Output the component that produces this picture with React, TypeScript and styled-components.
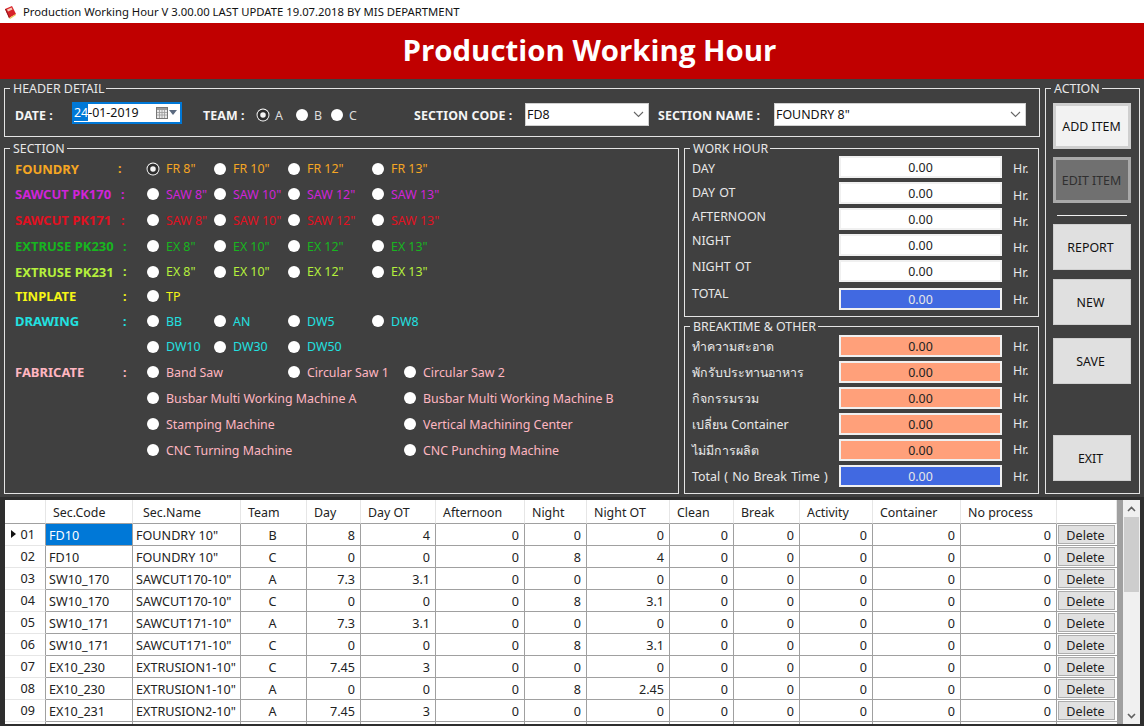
import React from 'react';
import styled, { createGlobalStyle } from 'styled-components';

const GlobalStyle = createGlobalStyle`
  html, body {
    margin: 0;
    padding: 0;
    background: #404040;
  }
  * {
    box-sizing: border-box;
  }
`;

const uiFont = `'Noto Sans', Tahoma, 'DejaVu Sans', sans-serif`;

const Page = styled.div`
  width: 1144px;
  height: 726px;
  overflow: hidden;
  background: #404040;
  font-family: ${uiFont};
  font-size: 12.4px;
  color: #f0f0f0;
`;

const TitleBar = styled.div`
  display: flex;
  align-items: center;
  height: 23px;
  padding-left: 4px;
  gap: 6px;
  background: #fff;
  color: #111;
  font-size: 11.3px;
`;

const Banner = styled.div`
  display: flex;
  align-items: center;
  justify-content: center;
  height: 56px;
  padding: 0 0 2px 35px;
  background: #c00000;
  color: #fff;
  font-family: 'Open Sans', sans-serif;
  font-weight: 700;
  font-size: 29.4px;
`;

const Main = styled.div`
  display: grid;
  grid-template-columns: 1036px 95px;
  column-gap: 5px;
  align-items: start;
  height: 418px;
  padding: 2px 0 0 4px;
`;

const LeftColumn = styled.div`
  display: flex;
  flex-direction: column;
  gap: 4px;
`;

const Group = styled.fieldset<{ $height?: number }>`
  margin: 0;
  padding: 0;
  min-width: 0;
  border: 1px solid #e4e4e4;
  height: ${(p) => (p.$height ? `${p.$height}px` : 'auto')};
`;

const Caption = styled.legend`
  margin-left: 5px;
  padding: 1px 2px 0 3px;
  font-size: 12.4px;
  line-height: 14px;
  color: #e8e8e8;
`;

/* header detail */
const HeaderRow = styled.div`
  display: flex;
  align-items: center;
  height: 24px;
  margin-top: 7px;
  padding-left: 10px;
`;

const BoldLabel = styled.span<{ $width: number }>`
  width: ${(p) => p.$width}px;
  flex: none;
  font-weight: 700;
  letter-spacing: 0.1px;
  color: #f4f4f4;
`;

const DateBox = styled.div`
  display: flex;
  align-items: center;
  width: 110px;
  height: 22px;
  flex: none;
  margin: 0 21px 5px 0;
  background: #fff;
  border: 2px solid #0078d7;
  color: #111;
`;

const Selected = styled.span`
  background: #0078d7;
  color: #fff;
`;

const DateIcons = styled.span`
  display: flex;
  align-items: center;
  margin-left: auto;
  margin-right: 3px;
  gap: 1px;
`;

const TeamOption = styled.span<{ $width: number }>`
  display: flex;
  align-items: center;
  gap: 6px;
  width: ${(p) => p.$width}px;
  flex: none;
  color: #dcdcdc;
`;

const Select = styled.div<{ $width: number; $gap: number }>`
  display: flex;
  align-items: center;
  justify-content: space-between;
  width: ${(p) => p.$width}px;
  height: 23px;
  flex: none;
  margin: 0 ${(p) => p.$gap}px 1px 0;
  padding: 0 4px 1px 1px;
  background: #fff;
  border: 1px solid #d0d0d0;
  color: #111;
`;

/* radios */
const Dot = styled.span<{ $on?: boolean }>`
  display: inline-block;
  flex: none;
  width: 12px;
  height: 12px;
  border-radius: 50%;
  background: ${(p) => (p.$on ? '#f4f4f4' : '#fff')};
  border: ${(p) => (p.$on ? '3px solid #2e2e2e' : 'none')};
  box-shadow: ${(p) => (p.$on ? '0 0 0 1px #fff' : 'none')};
  transform: ${(p) => (p.$on ? 'scale(0.92)' : 'none')};
`;

/* section */
const SectionGrid = styled.div`
  display: grid;
  grid-template-columns: 103px 29px 67px 74px 84px 32px 1fr;
  grid-template-rows: 25px 26px 26px 26px 25px 24px 26px 25px 26px 26px 26px 26px;
  padding-left: 10px;
  align-items: center;
`;

const GroupLabel = styled.span<{ $color: string; $row: number }>`
  grid-column: 1;
  grid-row: ${(p) => p.$row};
  font-size: 13px;
  font-weight: 700;
  color: ${(p) => p.$color};
  white-space: nowrap;
`;

const Colon = styled.span<{ $color: string; $row: number; $offset: number }>`
  grid-column: 2;
  grid-row: ${(p) => p.$row};
  margin-left: ${(p) => p.$offset}px;
  font-weight: 700;
  color: ${(p) => p.$color};
`;

const Choice = styled.label<{ $color: string; $row: number; $col: number }>`
  grid-column: ${(p) => p.$col} / span 3;
  grid-row: ${(p) => p.$row};
  display: flex;
  align-items: center;
  gap: 7px;
  color: ${(p) => p.$color};
  white-space: nowrap;
`;

/* hour panels */
const Split = styled.div`
  display: grid;
  grid-template-columns: 675px 355px;
  column-gap: 5px;
`;

const HourColumn = styled.div`
  display: flex;
  flex-direction: column;
  gap: 2px;
`;

const HourList = styled.div<{ $top: number }>`
  padding: ${(p) => p.$top}px 0 0 7px;
`;

const HourRow = styled.div<{ $mt?: number }>`
  display: grid;
  grid-template-columns: 147px 163px 1fr;
  height: 22px;
  margin-top: ${(p) => p.$mt ?? 4}px;
  align-items: center;
`;

const HourLabel = styled.span<{ $shift: number }>`
  transform: translateY(${(p) => p.$shift}px);
  color: #e8e8e8;
  white-space: nowrap;
  word-spacing: 1px;
`;

const HourValue = styled.div<{ $bg: string; $fg: string }>`
  display: flex;
  align-items: center;
  justify-content: center;
  height: 100%;
  background: ${(p) => p.$bg};
  color: ${(p) => p.$fg};
  border: 2px solid #f0f0f0;
`;

const Unit = styled.span<{ $shift: number }>`
  margin-left: 11px;
  transform: translateY(${(p) => p.$shift}px);
  color: #e8e8e8;
`;

/* action buttons */
const ActionList = styled.div`
  display: flex;
  flex-direction: column;
  padding: 7px 0 0 7px;
`;

const ActionButton = styled.div<{ $top: number; $tone?: 'light' | 'dim' }>`
  display: flex;
  align-items: center;
  justify-content: center;
  width: 78px;
  height: 46px;
  margin-top: ${(p) => p.$top}px;
  padding-right: ${(p) => (p.$tone ? 1 : 3)}px;
  color: ${(p) => (p.$tone === 'dim' ? '#2f2f2f' : '#111')};
  background: ${(p) =>
    p.$tone === 'dim' ? '#707070' : p.$tone === 'light' ? '#f2f2f2' : '#e0e0e0'};
  border: ${(p) => (p.$tone ? '3px' : '1px')} solid
    ${(p) => (p.$tone === 'dim' ? '#a9a9a9' : '#cfcfcf')};
`;

const Divider = styled.div`
  width: 70px;
  height: 1px;
  margin: 12px 0 0 4px;
  background: #f0f0f0;
`;

/* grid */
const GridArea = styled.div`
  height: 229px;
  padding: 3px 4px 0 5px;
  background: #2e2e2e;
`;

const GridPanel = styled.div`
  display: flex;
  height: 224px;
  background: #a0a0a0;
  overflow: hidden;
`;

const Table = styled.table`
  width: 1112px;
  flex: none;
  table-layout: fixed;
  border-collapse: separate;
  border-spacing: 0;
  align-self: flex-start;
  background: #fff;
  color: #222;
  font-size: 12.6px;
  line-height: 14px;
`;

const Th = styled.th<{ $pad?: number }>`
  height: 24px;
  padding: 2px 0 0 ${(p) => p.$pad ?? 7}px;
  font-weight: 400;
  font-size: 12.4px;
  text-align: left;
  background: #fff;
  border-right: 1px solid #e6e6e6;
  border-bottom: 1px solid #a0a0a0;
`;

const Td = styled.td<{ $align?: string; $active?: boolean }>`
  height: 22px;
  padding: 2px 5px 0 3px;
  text-align: ${(p) => p.$align ?? 'left'};
  white-space: nowrap;
  overflow: hidden;
  border-right: 1px solid #a0a0a0;
  border-bottom: 1px solid #a0a0a0;
  background: ${(p) => (p.$active ? '#0078d7' : '#fff')};
  color: ${(p) => (p.$active ? '#fff' : '#222')};
`;

const RowHead = styled.td`
  position: relative;
  height: 22px;
  padding: 0 10px 0 0;
  text-align: right;
  border-right: 1px solid #a0a0a0;
  border-bottom: 1px solid #e6e6e6;
  background: #fff;
`;

const Pointer = styled.span`
  position: absolute;
  left: 6px;
  top: 6px;
  width: 0;
  height: 0;
  border-left: 5px solid #111;
  border-top: 4px solid transparent;
  border-bottom: 4px solid transparent;
`;

const DeleteCell = styled.td`
  height: 22px;
  padding: 1px 2px 1px 1px;
  border-bottom: 1px solid #a0a0a0;
  background: #fff;
`;

const DeleteButton = styled.div`
  display: flex;
  align-items: center;
  justify-content: center;
  height: 19px;
  padding: 2px 2px 0 0;
  background: #e1e1e1;
  border: 1px solid #adadad;
  color: #222;
`;

const Scrollbar = styled.div`
  display: flex;
  flex-direction: column;
  align-items: center;
  width: 17px;
  height: 100%;
  margin-left: auto;
  background: #f0f0f0;
`;

const ScrollArrow = styled.div`
  display: flex;
  align-items: center;
  justify-content: center;
  flex: none;
  width: 100%;
  height: 17px;
`;

const ScrollThumb = styled.div`
  flex: none;
  width: 15px;
  height: 75px;
  background: #cdcdcd;
`;

const ScrollSpace = styled.div`
  flex: 1;
`;

const BookIcon = () => (
  <svg width="13" height="14" viewBox="0 0 13 14">
    <path d="M1 4 L8 1 L12 9 L5 13 Z" fill="#d8232a" />
    <path d="M1 4 L5 13 L6 13 L2 4 Z" fill="#8f1418" />
    <path d="M3 4.5 L7.5 2.5 L8.5 4.5 L4 6.5 Z" fill="#f6c9b4" />
    <path d="M5 13 L12 9 L12 10 L6 14 Z" fill="#e9c34f" />
  </svg>
);

const Chevron = () => (
  <svg width="11" height="7" viewBox="0 0 11 7">
    <path d="M1 1 L5.5 5.5 L10 1" fill="none" stroke="#666" strokeWidth="1.1" />
  </svg>
);

const CalendarIcon = () => (
  <svg width="12" height="12" viewBox="0 0 12 12">
    <rect x="0.5" y="0.5" width="11" height="11" fill="#e8e8e8" stroke="#777" />
    <rect x="1" y="1" width="10" height="2" fill="#9a9a9a" />
    <path d="M1 5.5H11M1 8H11M3.5 3V11M6 3V11M8.5 3V11" stroke="#999" strokeWidth="0.8" />
  </svg>
);

const DownTriangle = () => (
  <svg width="8" height="5" viewBox="0 0 8 5">
    <path d="M0 0H8L4 5Z" fill="#5b6a80" />
  </svg>
);

type Opt = { text: string; col: number; on?: boolean };

const col4 = (prefix: string, on = false): Opt[] =>
  ['8"', '10"', '12"', '13"'].map((s, i) => ({
    text: `${prefix} ${s}`,
    col: i + 3,
    on: on && i === 0,
  }));

const sections: {
  label?: string;
  color: string;
  row: number;
  colon?: number;
  options: Opt[];
}[] = [
  { label: 'FOUNDRY', color: '#f5a623', row: 1, colon: 0, options: col4('FR', true) },
  { label: 'SAWCUT PK170', color: '#d024d8', row: 2, colon: 3, options: col4('SAW') },
  { label: 'SAWCUT PK171', color: '#e01020', row: 3, colon: 3, options: col4('SAW') },
  { label: 'EXTRUSE PK230', color: '#17b51f', row: 4, colon: 5, options: col4('EX') },
  { label: 'EXTRUSE PK231', color: '#b5f03c', row: 5, colon: 5, options: col4('EX') },
  { label: 'TINPLATE', color: '#f5f516', row: 6, colon: 5, options: [{ text: 'TP', col: 3 }] },
  {
    label: 'DRAWING',
    color: '#22e0e0',
    row: 7,
    colon: 5,
    options: [
      { text: 'BB', col: 3 },
      { text: 'AN', col: 4 },
      { text: 'DW5', col: 5 },
      { text: 'DW8', col: 6 },
    ],
  },
  {
    color: '#22e0e0',
    row: 8,
    options: [
      { text: 'DW10', col: 3 },
      { text: 'DW30', col: 4 },
      { text: 'DW50', col: 5 },
    ],
  },
  {
    label: 'FABRICATE',
    color: '#ffb6c1',
    row: 9,
    colon: 5,
    options: [
      { text: 'Band Saw', col: 3 },
      { text: 'Circular Saw 1', col: 5 },
      { text: 'Circular Saw 2', col: 7 },
    ],
  },
  {
    color: '#ffb6c1',
    row: 10,
    options: [
      { text: 'Busbar Multi Working Machine A', col: 3 },
      { text: 'Busbar Multi Working Machine B', col: 7 },
    ],
  },
  {
    color: '#ffb6c1',
    row: 11,
    options: [
      { text: 'Stamping Machine', col: 3 },
      { text: 'Vertical Machining Center', col: 7 },
    ],
  },
  {
    color: '#ffb6c1',
    row: 12,
    options: [
      { text: 'CNC Turning Machine', col: 3 },
      { text: 'CNC Punching Machine', col: 7 },
    ],
  },
];

const workRows = [
  { label: 'DAY', shift: 1, unit: 1, mt: 0 },
  { label: 'DAY OT', shift: -1, unit: 2 },
  { label: 'AFTERNOON', shift: -3, unit: 2 },
  { label: 'NIGHT', shift: -5, unit: 2 },
  { label: 'NIGHT OT', shift: -5, unit: 1 },
  { label: 'TOTAL', shift: -6, unit: 0, mt: 6, total: true },
];

const breakRows = [
  { label: 'ทำความสะอาด', unit: 0, mt: 0 },
  { label: 'พักรับประทานอาหาร', unit: -2 },
  { label: 'กิจกรรมรวม', unit: -1 },
  { label: 'เปลี่ยน Container', unit: -1 },
  { label: 'ไม่มีการผลิต', unit: -1 },
  { label: 'Total ( No Break Time )', unit: 0, total: true },
];

const columns = [
  { title: 'Sec.Code', width: 87, pad: 7 },
  { title: 'Sec.Name', width: 108, pad: 10 },
  { title: 'Team', width: 66 },
  { title: 'Day', width: 54 },
  { title: 'Day OT', width: 75 },
  { title: 'Afternoon', width: 89 },
  { title: 'Night', width: 62 },
  { title: 'Night OT', width: 83 },
  { title: 'Clean', width: 64 },
  { title: 'Break', width: 66 },
  { title: 'Activity', width: 73 },
  { title: 'Container', width: 88 },
  { title: 'No process', width: 96 },
];

const rows = [
  ['FD10', 'FOUNDRY 10"', 'B', '8', '4', '0', '0', '0'],
  ['FD10', 'FOUNDRY 10"', 'C', '0', '0', '0', '8', '4'],
  ['SW10_170', 'SAWCUT170-10"', 'A', '7.3', '3.1', '0', '0', '0'],
  ['SW10_170', 'SAWCUT170-10"', 'C', '0', '0', '0', '8', '3.1'],
  ['SW10_171', 'SAWCUT171-10"', 'A', '7.3', '3.1', '0', '0', '0'],
  ['SW10_171', 'SAWCUT171-10"', 'C', '0', '0', '0', '8', '3.1'],
  ['EX10_230', 'EXTRUSION1-10"', 'C', '7.45', '3', '0', '0', '0'],
  ['EX10_230', 'EXTRUSION1-10"', 'A', '0', '0', '0', '8', '2.45'],
  ['EX10_231', 'EXTRUSION2-10"', 'A', '7.45', '3', '0', '0', '0'],
];

const SectionPanel: React.FC = () => (
  <Group $height={353}>
    <Caption>SECTION</Caption>
    <SectionGrid>
      {sections.map((s) => (
        <React.Fragment key={s.row}>
          {s.label && (
            <GroupLabel $color={s.color} $row={s.row}>
              {s.label}
            </GroupLabel>
          )}
          {s.label && (
            <Colon $color={s.color} $row={s.row} $offset={s.colon ?? 0}>
              :
            </Colon>
          )}
          {s.options.map((o) => (
            <Choice key={o.text + o.col} $color={s.color} $row={s.row} $col={o.col}>
              <Dot $on={o.on} />
              {o.text}
            </Choice>
          ))}
        </React.Fragment>
      ))}
    </SectionGrid>
  </Group>
);

const HourPanels: React.FC = () => (
  <HourColumn>
    <Group $height={176}>
      <Caption>WORK HOUR</Caption>
      <HourList $top={0}>
        {workRows.map((r) => (
          <HourRow key={r.label} $mt={r.mt}>
            <HourLabel $shift={r.shift}>{r.label}</HourLabel>
            <HourValue $bg={r.total ? '#4169e1' : '#fff'} $fg={r.total ? '#e8e8e8' : '#222'}>
              0.00
            </HourValue>
            <Unit $shift={r.unit}>Hr.</Unit>
          </HourRow>
        ))}
      </HourList>
    </Group>
    <Group $height={175}>
      <Caption>BREAKTIME &amp; OTHER</Caption>
      <HourList $top={1}>
        {breakRows.map((r) => (
          <HourRow key={r.label} $mt={r.mt}>
            <HourLabel $shift={0}>{r.label}</HourLabel>
            <HourValue $bg={r.total ? '#4169e1' : '#ffa07a'} $fg={r.total ? '#e8e8e8' : '#222'}>
              0.00
            </HourValue>
            <Unit $shift={r.unit}>Hr.</Unit>
          </HourRow>
        ))}
      </HourList>
    </Group>
  </HourColumn>
);

const App: React.FC = () => {
  return (
    <Page>
      <GlobalStyle />
      <TitleBar>
        <BookIcon />
        Production Working Hour V 3.00.00 LAST UPDATE 19.07.2018 BY MIS DEPARTMENT
      </TitleBar>
      <Banner>Production Working Hour</Banner>
      <Main>
        <LeftColumn>
          <Group $height={56}>
            <Caption>HEADER DETAIL</Caption>
            <HeaderRow>
              <BoldLabel $width={57}>DATE :</BoldLabel>
              <DateBox>
                <span>
                  <Selected>24</Selected>-01-2019
                </span>
                <DateIcons>
                  <CalendarIcon />
                  <DownTriangle />
                </DateIcons>
              </DateBox>
              <BoldLabel $width={54}>TEAM :</BoldLabel>
              <TeamOption $width={39}>
                <Dot $on />A
              </TeamOption>
              <TeamOption $width={35}>
                <Dot />B
              </TeamOption>
              <TeamOption $width={83}>
                <Dot />C
              </TeamOption>
              <BoldLabel $width={111}>SECTION CODE :</BoldLabel>
              <Select $width={124} $gap={9}>
                FD8
                <Chevron />
              </Select>
              <BoldLabel $width={116}>SECTION NAME :</BoldLabel>
              <Select $width={252} $gap={0}>
                FOUNDRY 8"
                <Chevron />
              </Select>
            </HeaderRow>
          </Group>
          <Split>
            <SectionPanel />
            <HourPanels />
          </Split>
        </LeftColumn>
        <Group $height={413}>
          <Caption>ACTION</Caption>
          <ActionList>
            <ActionButton $top={0} $tone="light">ADD ITEM</ActionButton>
            <ActionButton $top={8} $tone="dim">EDIT ITEM</ActionButton>
            <Divider />
            <ActionButton $top={8}>REPORT</ActionButton>
            <ActionButton $top={9}>NEW</ActionButton>
            <ActionButton $top={13}>SAVE</ActionButton>
            <ActionButton $top={51}>EXIT</ActionButton>
          </ActionList>
        </Group>
      </Main>
      <GridArea>
        <GridPanel>
          <Table>
            <colgroup>
              <col style={{ width: 41 }} />
              {columns.map((c) => (
                <col key={c.title} style={{ width: c.width }} />
              ))}
              <col style={{ width: 60 }} />
            </colgroup>
            <thead>
              <tr>
                <Th />
                {columns.map((c) => (
                  <Th key={c.title} $pad={c.pad}>
                    {c.title}
                  </Th>
                ))}
                <Th />
              </tr>
            </thead>
            <tbody>
              {rows.map((r, i) => (
                <tr key={i}>
                  <RowHead>
                    {i === 0 && <Pointer />}0{i + 1}
                  </RowHead>
                  <Td $active={i === 0}>{r[0]}</Td>
                  <Td>{r[1]}</Td>
                  <Td $align="center">{r[2]}</Td>
                  {r.slice(3).map((v, j) => (
                    <Td key={j} $align="right">
                      {v}
                    </Td>
                  ))}
                  {[0, 1, 2, 3, 4].map((j) => (
                    <Td key={j} $align="right">
                      0
                    </Td>
                  ))}
                  <DeleteCell>
                    <DeleteButton>Delete</DeleteButton>
                  </DeleteCell>
                </tr>
              ))}
              <tr>
                <RowHead />
                {columns.map((c) => (
                  <Td key={c.title} />
                ))}
                <DeleteCell />
              </tr>
            </tbody>
          </Table>
          <Scrollbar>
            <ScrollArrow>
              <svg width="9" height="6" viewBox="0 0 9 6">
                <path d="M1 5 L4.5 1.5 L8 5" fill="none" stroke="#606060" strokeWidth="1.6" />
              </svg>
            </ScrollArrow>
            <ScrollThumb />
            <ScrollSpace />
            <ScrollArrow>
              <svg width="9" height="6" viewBox="0 0 9 6">
                <path d="M1 1 L4.5 4.5 L8 1" fill="none" stroke="#606060" strokeWidth="1.6" />
              </svg>
            </ScrollArrow>
          </Scrollbar>
        </GridPanel>
      </GridArea>
    </Page>
  );
};

export default App;
